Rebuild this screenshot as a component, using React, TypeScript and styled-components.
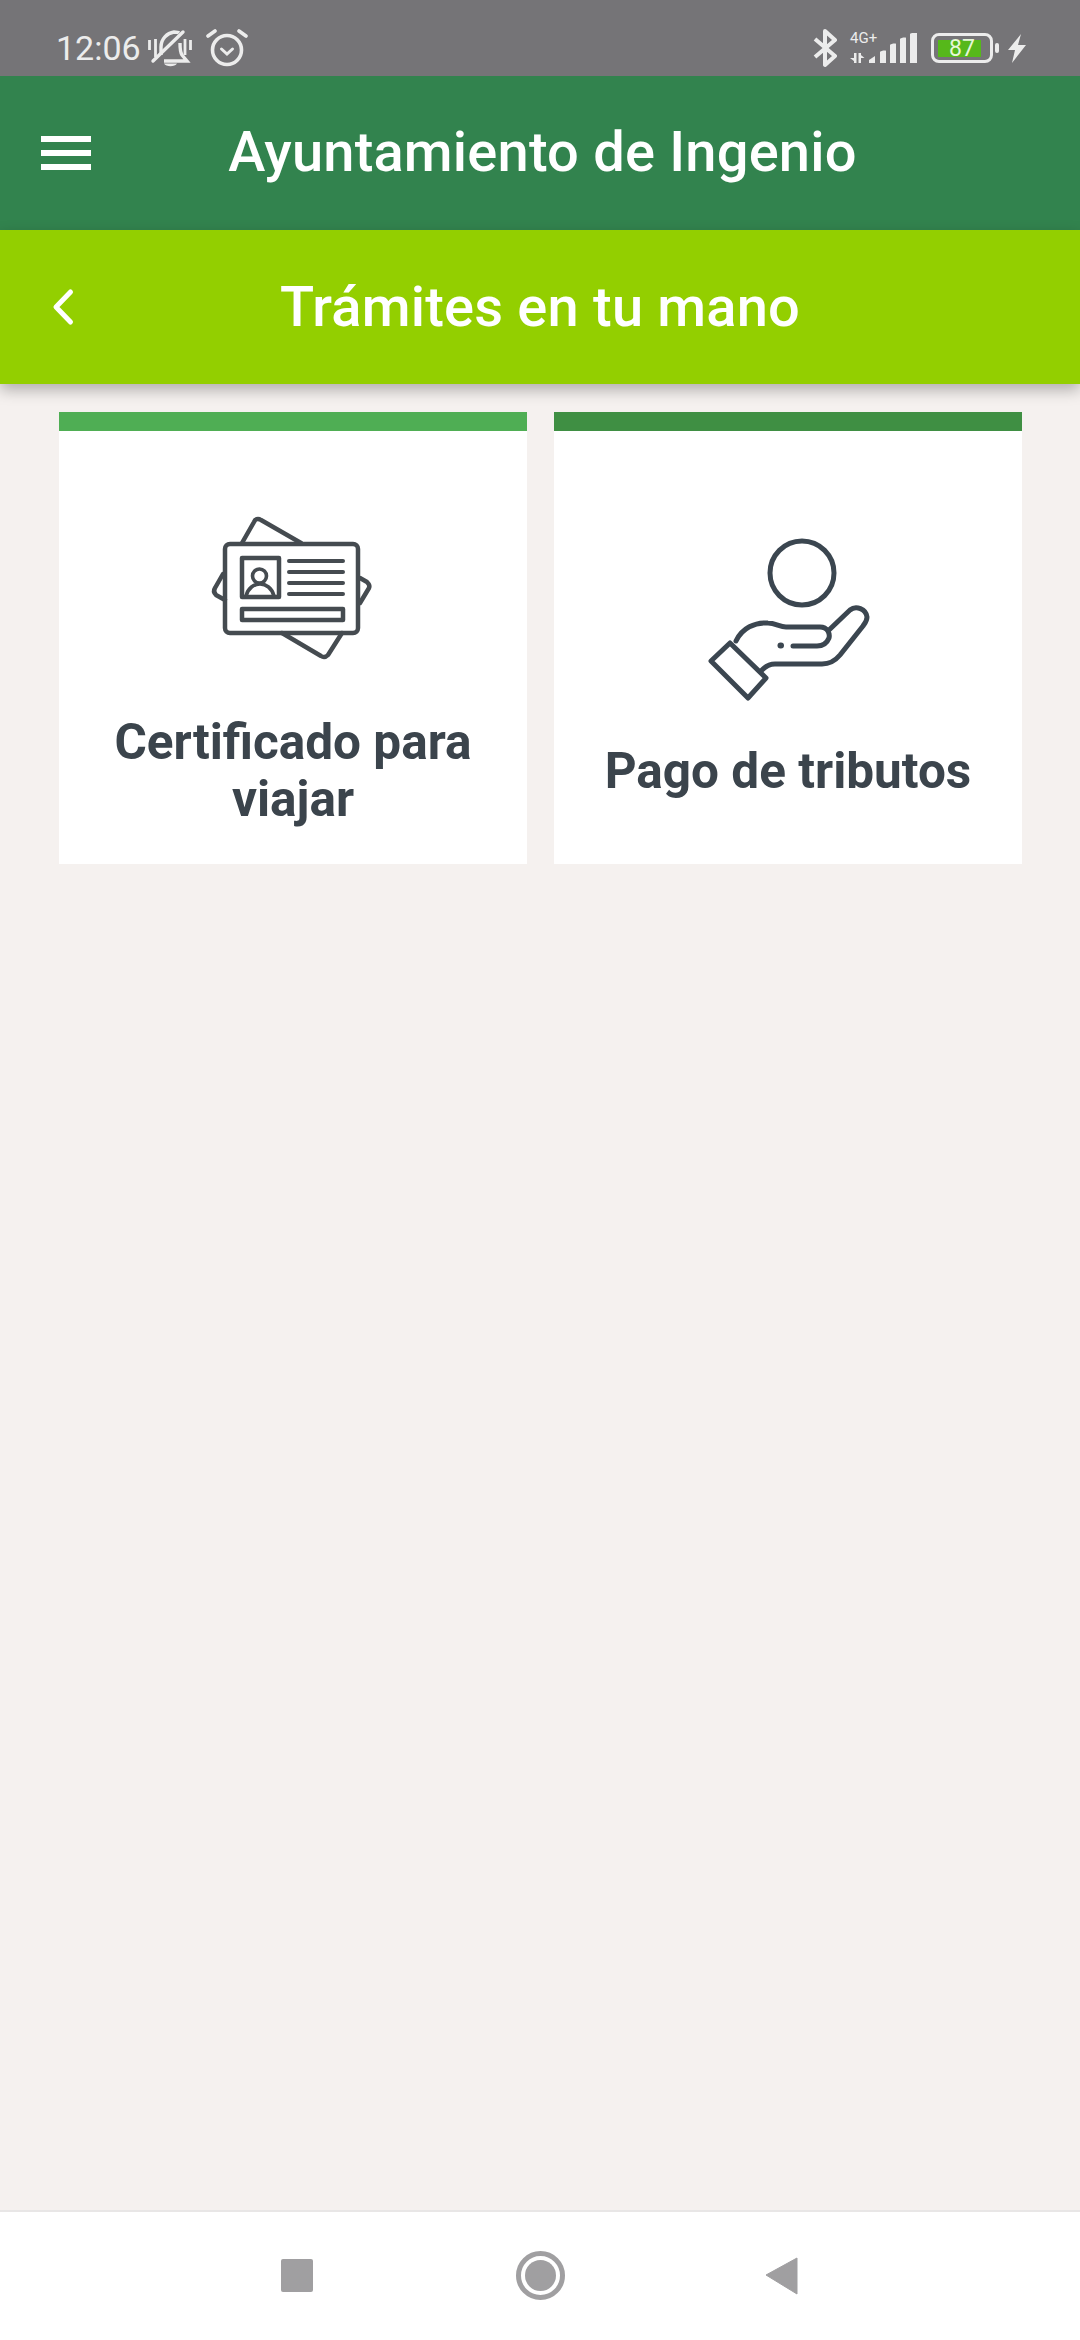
import React from 'react'
import styled, { createGlobalStyle } from 'styled-components'

const GlobalStyle = createGlobalStyle`
  html, body {
    margin: 0;
    padding: 0;
    background: #f5f1ef;
    font-family: Roboto, "Liberation Sans", sans-serif;
  }
`

const Screen = styled.div`
  width: 1080px;
  height: 2340px;
  display: flex;
  flex-direction: column;
  overflow: hidden;
  background: #f5f1ef;
`

const StatusBar = styled.div`
  height: 76px;
  flex: none;
  box-sizing: border-box;
  display: flex;
  align-items: center;
  justify-content: space-between;
  padding: 20px 54px 0 56px;
  background: #757477;
  color: #ececec;
`

const StatusGroup = styled.div`
  display: flex;
  align-items: center;
`

const Clock = styled.span`
  font-size: 34px;
  line-height: 1;
  margin-right: 7px;
`

const MainBar = styled.header`
  height: 154px;
  flex: none;
  display: grid;
  grid-template-columns: 1fr auto 1fr;
  align-items: center;
  background: #32834e;
  color: #fff;
`

const SubBar = styled(MainBar)`
  background: #93cf00;
  box-shadow: 0 6px 14px rgba(0, 0, 0, 0.28);
  position: relative;
`

const BarTitle = styled.h1`
  margin: 0;
  font-size: 56px;
  font-weight: 500;
  letter-spacing: 0.2px;
`

const MainTitle = styled(BarTitle)`
  padding: 0 0 2px 5px;
`

const Cards = styled.main`
  flex: 1;
  display: grid;
  grid-template-columns: 468px 468px;
  grid-auto-rows: 452px;
  gap: 27px;
  padding: 28px 58px 0 59px;
`

const Card = styled.section<{ $stripe: string }>`
  display: flex;
  flex-direction: column;
  align-items: center;
  background: #fff;
  border-top: 19px solid ${p => p.$stripe};
`

const CardLabel = styled.div`
  font-size: 49.5px;
  font-weight: 700;
  line-height: 57px;
  color: #3b444c;
  text-align: center;
`

const IconSlot = styled.div<{ $top: number; $bottom: number; $shift: number }>`
  display: flex;
  margin-top: ${p => p.$top}px;
  margin-bottom: ${p => p.$bottom}px;
  margin-left: ${p => p.$shift}px;
`

const NavBar = styled.nav`
  height: 130px;
  flex: none;
  display: flex;
  align-items: flex-start;
  padding-top: 41px;
  justify-content: center;
  box-sizing: border-box;
  background: #fff;
  border-top: 2px solid #e8e6e6;
`

const HamburgerIcon = () => (
  <svg width="52" height="36" viewBox="0 0 52 36" style={{ marginLeft: 41 }}>
    <path d="M0 4h50M0 18h50M0 32h50" stroke="#fff" strokeWidth="6" />
  </svg>
)

const BackIcon = () => (
  <svg width="24" height="38" viewBox="0 0 24 38" style={{ marginLeft: 52 }}>
    <path d="M18.500 4 4 19l14.500 15" fill="none" stroke="#fff" strokeWidth="5" strokeLinecap="round" strokeLinejoin="round" />
  </svg>
)

const MuteIcon = () => (
  <svg width="44" height="38" viewBox="0 0 44 38">
    <g fill="none" stroke="#ececec" strokeWidth="3.400">
      <path d="M13 26v-8c0-8 6-14 13-15 2 0 4 0 5 1" />
      <path d="M32 14c0 5 0 9 2 12l5 6H16" />
      <path d="M5 32 35 3" strokeLinecap="round" />
      <path d="M1.500 11v10M7.500 10v18M37 10v16M42.500 11v10" strokeWidth="2.800" />
    </g>
    <path d="M16 34.500h13c-2 3.500-11 3.500-13 0z" fill="#ececec" />
  </svg>
)

const AlarmIcon = () => (
  <svg width="42" height="38" viewBox="0 0 42 38" style={{ marginLeft: 14 }}>
    <g fill="none" stroke="#ececec" strokeWidth="3.600" strokeLinecap="round">
      <circle cx="21" cy="21" r="14.500" />
      <path d="M15.500 20l5.500 5 5.500-5" strokeWidth="3" />
      <path d="M2 7 9 2M40 7 33 2" />
    </g>
  </svg>
)

const BluetoothIcon = () => (
  <svg width="24" height="40" viewBox="0 0 24 40">
    <path d="M2 11 22 28 12 37V3l10 9L2 29" fill="none" stroke="#ececec" strokeWidth="4" strokeLinejoin="round" />
  </svg>
)

const Signal = styled.div`
  position: relative;
  display: flex;
  margin-left: 13px;
`

const NetworkLabel = styled.span`
  position: absolute;
  left: 0;
  top: -1px;
  font-size: 15px;
  line-height: 13px;
  color: #ececec;
`

const SignalBars = () => (
  <svg width="68" height="30" viewBox="0 0 68 30">
    <path d="M4 20h2.500v10H4zM0 25h6.500v5zM8.500 20H11v10H8.500zM8.500 20l6 5h-6z" fill="#ececec" />
    <path d="M19 30v-3l6-4v7zM30 30V19c0-1 6-2 6-1v12zM40 30V12c0-1 6-2 6-1v19zM50 30V6c0-1 6-2 6-1v25zM60 30V1c0-1 7-2 7-1v30z" fill="#ececec" />
  </svg>
)

const BatteryBody = styled.div`
  position: relative;
  width: 62px;
  height: 30px;
  box-sizing: border-box;
  margin-left: 13px;
  padding: 3.5px 9.5px 3.5px 3.5px;
  border: 3.5px solid #ececec;
  border-radius: 8px;
  display: flex;
`

const BatteryFill = styled.div`
  flex: 1;
  background: #56b81a;
`

const BatteryText = styled.span`
  position: absolute;
  inset: 0;
  display: flex;
  align-items: center;
  justify-content: center;
  color: #e6f7d8;
  font-size: 23px;
  line-height: 1;
`

const BatteryTip = styled.div`
  width: 4px;
  height: 10px;
  margin-left: 2px;
  border-radius: 2px;
  background: #ececec;
`

const BoltIcon = () => (
  <svg width="18" height="29" viewBox="0 0 18 29" style={{ marginLeft: 9 }}>
    <path d="M13 0 0 16h7L4 29 18 11h-8z" fill="#ececec" />
  </svg>
)

const IdCardsIcon = () => (
  <svg width="220" height="190" viewBox="0 0 220 190">
    <g fill="none" stroke="#454b50" strokeWidth="4.500" strokeLinejoin="round" strokeLinecap="round">
      <path d="M62 53 74 32c1-3 4-4 7-2l40 23" />
      <path d="M43 84 35 98c-2 3-1 5 1 7l9 5" />
      <path d="M180 88l7 4c2 2 3 4 2 6l-9 15" />
      <path d="M102 143l39 23c3 2 5 1 7-1l14-22" />
      <rect x="45" y="54" width="133" height="89" rx="5" />
      <rect x="62" y="68" width="37" height="39" />
      <circle cx="79.500" cy="86" r="7" strokeWidth="3.600" />
      <path d="M66 106c2-8 8-12 14-12s12 4 14 12" strokeWidth="3.600" />
      <path d="M109 71h54M109 82h54M109 93h54M109 104h54" strokeWidth="4" />
      <rect x="62" y="119" width="101" height="11" />
    </g>
  </svg>
)

const HandIcon = () => (
  <svg width="220" height="200" viewBox="0 0 220 200">
    <g fill="none" stroke="#3b4650" strokeWidth="5" strokeLinejoin="round" strokeLinecap="round">
      <circle cx="122" cy="63" r="32" />
      <path d="M50 133 31 151 68 188 86 168z" />
      <path d="M56 131c6-13 19-19 32-18 7 0 12 4 18 4h34c8 0 10 7 9 11-2 5-6 8-12 8h-24" />
      <path d="M149 120l21-20c6-5 16-1 17 7 0 4-2 6-4 9l-23 29c-5 6-10 9-18 9H95c-5 0-9 2-13 6" />
      <path d="M100.500 135.500h.5" strokeWidth="6" />
    </g>
  </svg>
)

const SquareButton = styled.div`
  width: 32px;
  height: 33px;
  margin-top: 6px;
  border-radius: 2px;
  background: #a09fa1;
`

const HomeButton = styled.div`
  width: 49px;
  height: 49px;
  box-sizing: border-box;
  margin: -2px 200px 0 203px;
  border: 5px solid #a09fa1;
  border-radius: 50%;
  padding: 4px;
  &::after {
    content: '';
    display: block;
    width: 100%;
    height: 100%;
    border-radius: 50%;
    background: #a09fa1;
  }
`

const BackButton = () => (
  <svg width="34" height="38" viewBox="0 0 34 38" style={{ marginTop: 4 }}>
    <path d="M32 1v36L1 18z" fill="#a09fa1" stroke="#a09fa1" strokeWidth="1" strokeLinejoin="round" />
  </svg>
)

const App = () => (
  <Screen>
    <GlobalStyle />
    <StatusBar>
      <StatusGroup>
        <Clock>12:06</Clock>
        <MuteIcon />
        <AlarmIcon />
      </StatusGroup>
      <StatusGroup>
        <BluetoothIcon />
        <Signal>
          <NetworkLabel>4G+</NetworkLabel>
          <SignalBars />
        </Signal>
        <BatteryBody>
          <BatteryFill />
          <BatteryText>87</BatteryText>
        </BatteryBody>
        <BatteryTip />
        <BoltIcon />
      </StatusGroup>
    </StatusBar>
    <MainBar>
      <HamburgerIcon />
      <MainTitle>Ayuntamiento de Ingenio</MainTitle>
    </MainBar>
    <SubBar>
      <BackIcon />
      <BarTitle>Trámites en tu mano</BarTitle>
    </SubBar>
    <Cards>
      <Card $stripe="#4fae54">
        <IconSlot $top={59} $bottom={34} $shift={-6}>
          <IdCardsIcon />
        </IconSlot>
        <CardLabel>Certificado para<br />viajar</CardLabel>
      </Card>
      <Card $stripe="#3f8f43">
        <IconSlot $top={79} $bottom={33} $shift={4}>
          <HandIcon />
        </IconSlot>
        <CardLabel>Pago de tributos</CardLabel>
      </Card>
    </Cards>
    <NavBar>
      <SquareButton />
      <HomeButton />
      <BackButton />
    </NavBar>
  </Screen>
)

export default App
